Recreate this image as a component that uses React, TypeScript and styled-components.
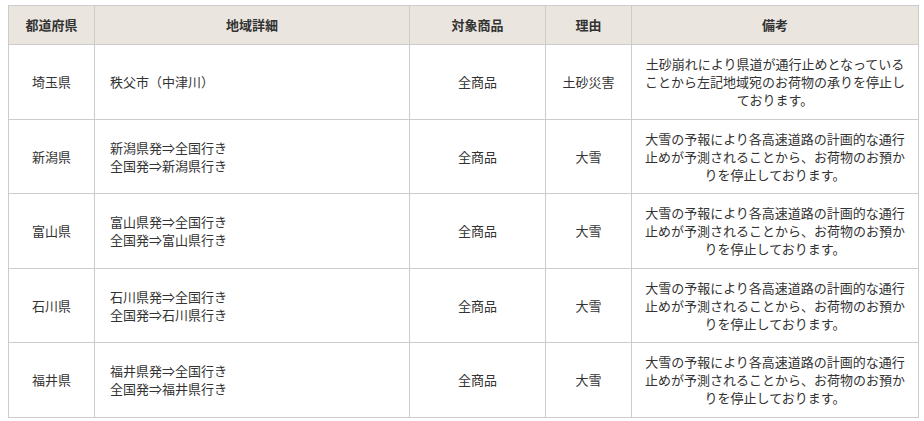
import React from "react";
import styled, { createGlobalStyle } from "styled-components";

type Row = {
  pref: string;
  area: string[];
  goods: string;
  reason: string;
  note: string;
};

const SNOW_NOTE =
  "大雪の予報により各高速道路の計画的な通行止めが予測されることから、お荷物のお預かりを停止しております。";

const ROWS: Row[] = [
  {
    pref: "埼玉県",
    area: ["秩父市（中津川）"],
    goods: "全商品",
    reason: "土砂災害",
    note: "土砂崩れにより県道が通行止めとなっていることから左記地域宛のお荷物の承りを停止しております。",
  },
  { pref: "新潟県", area: ["新潟県発⇒全国行き", "全国発⇒新潟県行き"], goods: "全商品", reason: "大雪", note: SNOW_NOTE },
  { pref: "富山県", area: ["富山県発⇒全国行き", "全国発⇒富山県行き"], goods: "全商品", reason: "大雪", note: SNOW_NOTE },
  { pref: "石川県", area: ["石川県発⇒全国行き", "全国発⇒石川県行き"], goods: "全商品", reason: "大雪", note: SNOW_NOTE },
  { pref: "福井県", area: ["福井県発⇒全国行き", "全国発⇒福井県行き"], goods: "全商品", reason: "大雪", note: SNOW_NOTE },
];

const COLS = [86, 315, 136, 86, 287];

const GlobalStyle = createGlobalStyle`
  html, body {
    margin: 0;
    background: #fff;
  }
  body {
    font-family: "Noto Sans CJK JP", "Noto Sans", sans-serif;
    color: #333;
  }
`;

const Wrap = styled.div`
  padding: 5px 0 0 8px;
`;

const Table = styled.table`
  width: 910px;
  table-layout: fixed;
  border-collapse: collapse;
  font-size: 13px;
  line-height: 18px;
`;

const Th = styled.th`
  background: #eae6df;
  border: 1px solid #ccc;
  padding: 10px 10px;
  font-weight: bold;
  text-align: center;
  color: #333;
`;

const Td = styled.td<{ $align?: "left" | "center"; $pad?: string }>`
  border: 1px solid #ccc;
  padding: ${(p) => p.$pad ?? "10px 15px 9.5px"};
  text-align: ${(p) => p.$align ?? "center"};
  vertical-align: middle;
  color: #333;
`;

const Line = styled.div`
  white-space: nowrap;
`;

export default function App() {
  return (
    <>
      <GlobalStyle />
      <Wrap>
        <Table>
          <colgroup>
            {COLS.map((w, i) => (
              <col key={i} style={{ width: w }} />
            ))}
          </colgroup>
          <thead>
            <tr>
              <Th>都道府県</Th>
              <Th>地域詳細</Th>
              <Th>対象商品</Th>
              <Th>理由</Th>
              <Th>備考</Th>
            </tr>
          </thead>
          <tbody>
            {ROWS.map((r) => (
              <tr key={r.pref}>
                <Td>{r.pref}</Td>
                <Td $align="left">
                  {r.area.map((a) => (
                    <Line key={a}>{a}</Line>
                  ))}
                </Td>
                <Td>{r.goods}</Td>
                <Td>{r.reason}</Td>
                <Td $pad="10px 10px 9.5px">{r.note}</Td>
              </tr>
            ))}
          </tbody>
        </Table>
      </Wrap>
    </>
  );
}
